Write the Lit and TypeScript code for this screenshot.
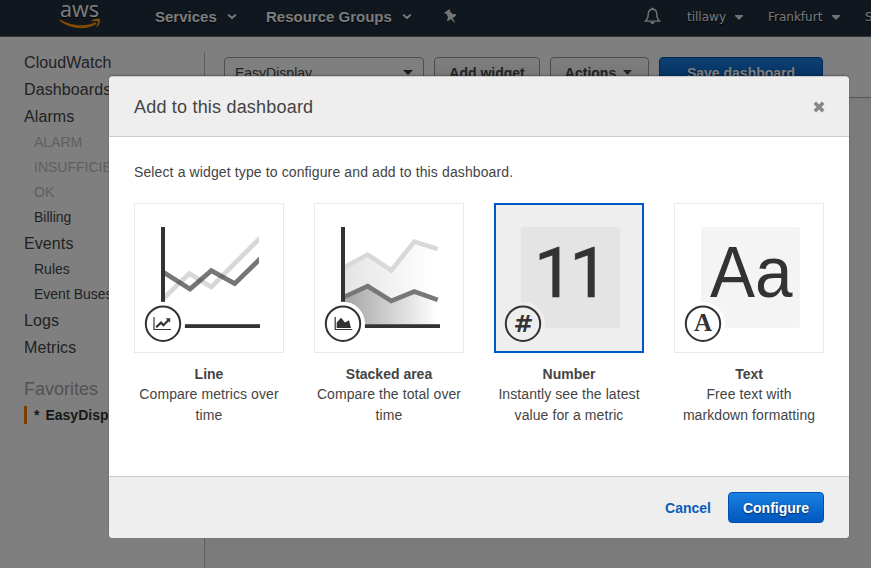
import { LitElement, html, svg, css } from "lit";
import { customElement, property } from "lit/decorators.js";

const caret = (w: number, h: number, color: string) =>
  html`<svg width=${w} height=${h} viewBox="0 0 10 6" preserveAspectRatio="none"><path d="M0 0H10L5 6Z" fill=${color} /></svg>`;

const chevron = html`<svg width="10" height="7" viewBox="0 0 10 7">
  <path d="M1.2 1.6L5 5L8.8 1.6" fill="none" stroke="#fff" stroke-width="1.9" /></svg>`;

const smallCaret = html`<svg width="8" height="5" viewBox="0 0 8 5"><path d="M0 0H8V1L4 5L0 1Z" fill="#e4e4e4" /></svg>`;

const badgeRing = (fill: string) => svg`
  <circle cx="29" cy="120.7" r="22" fill=${fill} />
  <circle cx="29" cy="120.7" r="17.2" fill=${fill} stroke="#333" stroke-width="2" />`;

const axes = svg`
  <rect x="27" y="24" width="4" height="75.6" fill="#333" />
  <rect x="50.6" y="121.2" width="75.4" height="3.8" fill="#333" />`;

const pictures: Record<string, unknown> = {
  line: svg`
    <clipPath id="plot"><rect x="29" y="20" width="96" height="90" /></clipPath>
    <g clip-path="url(#plot)" fill="none" stroke-width="4.8">
      <path d="M29 96L55.3 70.6L77.3 84L128 33" stroke="#d8d8d8" />
      <path d="M29 69L56 86L77.3 67.6L100.7 80.6L128 54" stroke="#333" stroke-opacity=".67" />
    </g>
    ${axes} ${badgeRing("#fff")}
    <path d="M20 114V126.5H37" fill="none" stroke="#333" stroke-width="1.2" />
    <path d="M22.2 124.2L27 119.6L29.4 122.2L34.6 117" fill="none" stroke="#333" stroke-width="2.2" />
    <path d="M31.6 115.2H36.2V119.8Z" fill="#333" />`,
  area: svg`
    <linearGradient id="upper"><stop offset="0" stop-color="#e4e4e4" /><stop offset=".95" stop-color="#fff" /></linearGradient>
    <linearGradient id="lower"><stop offset="0" stop-color="#a4a4a4" /><stop offset="1" stop-color="#fff" /></linearGradient>
    <path d="M30 64.6L53.7 51.3L77.3 67.7L100.3 38.3L123.7 46V121H30Z" fill="url(#upper)" />
    <path d="M30 94L53.7 83L77.3 98L100.3 88.3L123.7 97V121H30Z" fill="url(#lower)" />
    <path d="M30 64.6L53.7 51.6L77.3 67.4L100.3 38.6L123.7 46" fill="none" stroke="#d8d8d8" stroke-width="4.6" />
    <path d="M30 94L53.7 83.2L77.3 98L100.3 88.5L123.7 96.8" fill="none" stroke="#777" stroke-width="4.6" />
    ${axes} ${badgeRing("#fff")}
    <path d="M21.2 114V126.5H38.3" fill="none" stroke="#333" stroke-width="1.2" />
    <path d="M22.7 125V119.5L27 114.8L31 119.6L35 117.2L37 125Z" fill="#333" />`,
  number: svg`
    <rect x="27" y="24" width="99" height="101" rx="3" fill="#e4e4e4" />
    ${badgeRing("#eee")}
    <text x="40" y="94" class="digits">11</text>
    <text x="19.4" y="129" class="hash" textLength="20" lengthAdjust="spacingAndGlyphs">#</text>`,
  text: svg`
    <rect x="27" y="24" width="99" height="101" rx="3" fill="#f4f4f4" />
    ${badgeRing("#fff")}
    <text x="36" y="94" class="letters" textLength="82.5" lengthAdjust="spacingAndGlyphs">Aa</text>
    <text x="29" y="128" class="serif" text-anchor="middle">A</text>`,
};

@customElement("widget-option")
class WidgetOption extends LitElement {
  @property() kind = "line";
  @property() label = "";
  @property() description = "";
  @property({ type: Boolean, reflect: true }) selected = false;

  static styles = css`
    :host { display: block; width: 150px; text-align: center; }
    .tile { box-sizing: border-box; width: 150px; height: 150px; border: 1px solid #eaeaea; background: #fff; display: flex; }
    :host([selected]) .tile { border: 2px solid #0058c8; background: #eee; }
    .tile svg { flex: none; width: 150px; height: 150px; margin: -1px; }
    :host([selected]) .tile svg { margin: -2px; }
    .label { font-weight: bold; margin-top: 11px; line-height: 20px; }
    .description { line-height: 21px; letter-spacing: 0.08px; }
    .digits { font: 400 70.5px Roboto, sans-serif; letter-spacing: -4.4px; fill: #333; stroke: #333; stroke-width: 0.5px; }
    .hash { font: bold 23px "DejaVu Sans", sans-serif; fill: #333; }
    .letters { font: 72px "Liberation Sans", sans-serif; fill: #333; }
    .serif { font: bold 25px "Liberation Serif", serif; fill: #333; }
  `;

  render() {
    return html`
      <div class="tile"><svg viewBox="0 0 150 150">${pictures[this.kind]}</svg></div>
      <div class="label">${this.label}</div>
      <div class="description">${this.description}</div>`;
  }
}

@customElement("app-root")
class AppRoot extends LitElement {
  static styles = css`
    :host { display: block; position: relative; width: 871px; height: 568px; overflow: hidden; background: #fff;
      font: 14px "Liberation Sans", Arial, sans-serif; color: #444; }
    * { box-sizing: border-box; }
    svg { display: block; flex: none; }
    .page { display: flex; flex-direction: column; height: 568px; }
    .topbar { height: 37px; flex: none; display: flex; align-items: center; padding: 0 0 4px 58px; background: #202e3d;
      border-bottom: 1px solid #666; color: #fff; white-space: nowrap; text-shadow: 0 1px 1px #000; }
    .topbar > * { flex: none; }
    .logo { width: 43px; height: 32px; margin-right: 54px; overflow: visible; }
    .logo text { font: 500 22.5px "Open Sans", sans-serif; fill: #fff; }
    .menu { display: flex; align-items: center; font: bold 15px "Liberation Sans", sans-serif; color: #f8f8f8; }
    .services { margin-right: 29px; width: 82px; justify-content: space-between; }
    .groups { margin-right: 31px; width: 146px; justify-content: space-between; }
    .bell { margin-left: 187px; }
    .account { display: flex; align-items: center; font: 12px "DejaVu Sans", sans-serif; color: #f0f0f0; padding-top: 2px; }
    .user { width: 56px; justify-content: space-between; margin: 0 25px 0 26px; }
    .region { width: 72px; justify-content: space-between; margin-right: 25px; }
    .body { flex: 1; display: flex; min-height: 0; }
    .sidebar { width: 204px; flex: none; padding: 11.5px 0 0 24px; white-space: nowrap; }
    .item { font-size: 16px; line-height: 27px; letter-spacing: 0.1px; }
    .sub { font-size: 14px; line-height: 25px; padding-left: 10px; }
    .muted { color: #c0c0c0; }
    .favorites { font-size: 18px; line-height: 26px; margin-top: 15px; color: #a4a4a4; }
    .favorite { display: flex; align-items: center; height: 18px; margin-top: 4px; padding-left: 7px; gap: 6px;
      border-left: 3px solid #f47800; font-weight: bold; color: #333; }
    .content { flex: 1; margin-top: 15px; border-left: 1px solid #bbb; display: flex; flex-direction: column; }
    .toolbar { display: flex; gap: 10px; height: 46px; flex: none; padding: 5px 0 0 19px; border-bottom: 1px solid #aaa; }
    .canvas { flex: 1; background: #f6f6f6; }
    .control { height: 31px; display: flex; align-items: center; justify-content: center; border: 1px solid #999;
      border-radius: 4px; font-weight: bold; gap: 7px; background: linear-gradient(#fff, #e4e4e4); }
    .select { width: 200px; justify-content: space-between; padding: 0 10px; font-weight: normal; background: #fff; }
    .add { width: 106px; }
    .actions { width: 99px; padding-right: 2px; }
    .save { width: 164px; }
    .primary { color: #fff; background: linear-gradient(#1a80e0, #0058c0); border: 1px solid #0050b0;
      border-radius: 4px; text-shadow: 0 1px 2px rgba(0, 0, 0, 0.6); font-weight: bold; }
    .overlay { position: absolute; inset: 0; background: rgba(0, 0, 0, 0.5); display: flex; align-items: flex-start; padding: 76px 0 0 109px; }
    .modal { width: 740px; height: 462px; display: flex; flex-direction: column; background: #fff; border-radius: 4px;
      border-top: 1px solid #ccc; overflow: hidden; box-shadow: 0 -1px 2px rgba(0, 0, 0, 0.25); }
    .head { height: 60px; flex: none; display: flex; align-items: center; justify-content: space-between; padding: 0 24px 0 25px;
      background: #eee; border-bottom: 1px solid #ccc; font-size: 18px; }
    .title { letter-spacing: 0.2px; padding-top: 2px; }
    .main { flex: 1; padding: 26px 25px 0; }
    .intro { line-height: 18px; margin: 0 0 22px; letter-spacing: 0.12px; }
    .options { display: flex; gap: 30px; }
    .foot { height: 62px; flex: none; display: flex; align-items: center; justify-content: flex-end; gap: 17px; padding: 0 25px 0 0;
      background: #eee; border-top: 1px solid #ccc; }
    .cancel { font-weight: bold; color: #0a5cb8; }
    .configure { width: 96px; height: 31px; display: flex; align-items: center; justify-content: center; }
  `;

  render() {
    return html`
      <div class="page">
        <header class="topbar">
          <svg class="logo" viewBox="0 0 43 32">
            <text x="2" y="16.8" textLength="39" lengthAdjust="spacingAndGlyphs">aws</text>
            <path d="M1 20C12 29.8 29 30.4 38.4 24L37.4 22.2C28 27 14 26.2 1.8 19.4Z" fill="#ff9900" />
            <path d="M33.8 20.4C37 18.4 40.4 18.6 42 19.1C42.4 22 41 25.4 38.8 27.2L38.3 26.6C39.4 24.2 40 22.2 39.7 21.5C38.8 20.9 36.6 21.1 34 21.4Z" fill="#ff9900" />
          </svg>
          <div class="menu services">Services ${chevron}</div>
          <div class="menu groups">Resource Groups ${chevron}</div>
          <svg width="14" height="15" viewBox="0 0 14 15">
            <path d="M1.4 3.4L6.4 .2L7.2 1.1L7 2.5L9.6 5.1L12.5 5.1L13 6.7L9.7 9.1L12 13.4L11.5 13.8L8 10.1L4.7 12.2L4 11L5 8.3L3.5 4.8L1.8 4.7Z" fill="#e8e8e8" />
          </svg>
          <svg class="bell" width="17" height="18" viewBox="0 0 17 18">
            <path d="M8.5 2.2C5.3 2.2 4.2 4.6 4.2 7.4C4.2 10.8 3.4 12.2 1.4 14.1H15.6C13.6 12.2 12.8 10.8 12.8 7.4C12.8 4.6 11.7 2.2 8.5 2.2Z" fill="none" stroke="#e4e4e4" stroke-width="1.4" />
            <path d="M7.3 2.2V.8H9.7V2.2ZM6.2 15H10.8C10.5 17.6 6.5 17.6 6.2 15Z" fill="#e4e4e4" />
          </svg>
          <div class="account user">tillawy ${smallCaret}</div>
          <div class="account region">Frankfurt ${smallCaret}</div>
          <div class="account">Support</div>
        </header>
        <div class="body">
          <nav class="sidebar">
            <div class="item">CloudWatch</div>
            <div class="item">Dashboards</div>
            <div class="item">Alarms</div>
            <div class="sub muted">ALARM</div>
            <div class="sub muted">INSUFFICIENT</div>
            <div class="sub muted">OK</div>
            <div class="sub">Billing</div>
            <div class="item">Events</div>
            <div class="sub">Rules</div>
            <div class="sub">Event Buses</div>
            <div class="item">Logs</div>
            <div class="item">Metrics</div>
            <div class="favorites">Favorites</div>
            <div class="favorite"><span>*</span><span>EasyDisplay</span></div>
          </nav>
          <section class="content">
            <div class="toolbar">
              <div class="control select">EasyDisplay ${caret(10, 5, "#333")}</div>
              <div class="control add">Add widget</div>
              <div class="control actions">Actions ${caret(9, 5, "#444")}</div>
              <div class="control primary save">Save dashboard</div>
            </div>
            <div class="canvas"></div>
          </section>
        </div>
      </div>
      <div class="overlay">
        <div class="modal" role="dialog">
          <div class="head">
            <span class="title">Add to this dashboard</span>
            <svg width="12" height="12" viewBox="0 0 12 12"><path d="M1.8 1.8L10.2 10.2M10.2 1.8L1.8 10.2" stroke="#888" stroke-width="3.6" /></svg>
          </div>
          <div class="main">
            <p class="intro">Select a widget type to configure and add to this dashboard.</p>
            <div class="options">
              <widget-option kind="line" label="Line" description="Compare metrics over time"></widget-option>
              <widget-option kind="area" label="Stacked area" description="Compare the total over time"></widget-option>
              <widget-option kind="number" label="Number" description="Instantly see the latest value for a metric" selected></widget-option>
              <widget-option kind="text" label="Text" description="Free text with markdown formatting"></widget-option>
            </div>
          </div>
          <div class="foot">
            <span class="cancel">Cancel</span>
            <span class="primary configure">Configure</span>
          </div>
        </div>
      </div>`;
  }
}
